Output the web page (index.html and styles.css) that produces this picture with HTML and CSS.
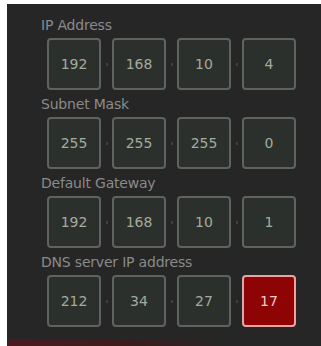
FILE: index.html
```html
<!DOCTYPE html>
<html>
<head>
<meta charset="utf-8">
<link rel="stylesheet" href="styles.css">
</head>
<body>
<div class="panel">
  <div class="section">
    <div class="label">IP Address</div>
    <div class="row">
      <div class="box">192</div><span class="sep"></span>
      <div class="box">168</div><span class="sep"></span>
      <div class="box">10</div><span class="sep"></span>
      <div class="box">4</div>
    </div>
  </div>
  <div class="section">
    <div class="label">Subnet Mask</div>
    <div class="row">
      <div class="box">255</div><span class="sep"></span>
      <div class="box">255</div><span class="sep"></span>
      <div class="box">255</div><span class="sep"></span>
      <div class="box">0</div>
    </div>
  </div>
  <div class="section">
    <div class="label">Default Gateway</div>
    <div class="row">
      <div class="box">192</div><span class="sep"></span>
      <div class="box">168</div><span class="sep"></span>
      <div class="box">10</div><span class="sep"></span>
      <div class="box">1</div>
    </div>
  </div>
  <div class="section">
    <div class="label">DNS server IP address</div>
    <div class="row">
      <div class="box">212</div><span class="sep"></span>
      <div class="box">34</div><span class="sep"></span>
      <div class="box">27</div><span class="sep"></span>
      <div class="box active">17</div>
    </div>
  </div>
  <div class="strip"></div>
</div>
</body>
</html>
```

FILE: styles.css
```css
html, body {
  margin: 0;
  padding: 0;
  background: #ffffff;
}
body {
  padding: 4px 0 0 7px;
  font-family: "DejaVu Sans", "Liberation Sans", sans-serif;
}
.panel {
  width: 314px;
  height: 342px;
  background: #262626;
  box-sizing: border-box;
  padding: 12px 0 0 34px;
  display: flex;
  flex-direction: column;
}
.section {
  display: flex;
  flex-direction: column;
  gap: 4px;
  margin-bottom: 5px;
}
.label {
  height: 18px;
  line-height: 18px;
  font-size: 14px;
  color: #8a8a8a;
  letter-spacing: -0.2px;
}
.row {
  display: flex;
  align-items: center;
  margin-left: 6px;
}
.box {
  width: 54px;
  height: 52px;
  box-sizing: border-box;
  border: 2px solid #5f635f;
  border-radius: 4px;
  background: #2c302c;
  color: #a3ab9e;
  font-size: 14px;
  display: flex;
  align-items: center;
  justify-content: center;
}
.box.active {
  background: #8e0303;
  border-color: #e9a3a3;
  color: #f4cccc;
}
.sep {
  width: 11px;
  display: flex;
  justify-content: center;
}
.sep::before {
  content: "";
  width: 2px;
  height: 3px;
  background: #3e423e;
}
.strip {
  margin: auto 0 0 -34px;
  height: 7px;
  background: linear-gradient(to right, #4a1a20, #3a1c1e 40%, #262626 70%);
}
```
